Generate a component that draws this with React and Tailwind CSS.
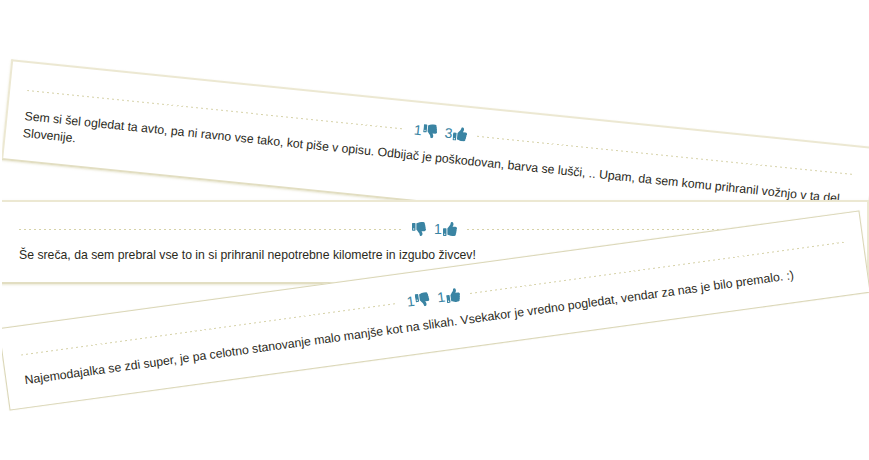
import { FaThumbsUp, FaThumbsDown } from "react-icons/fa";

function Dashes() {
  return <div className="h-px flex-1 bg-[repeating-linear-gradient(90deg,#d6d2a8_0_2px,transparent_2px_5px)]" />;
}

function Votes({ down, up }) {
  return (
    <div className="flex items-center justify-center">
      <Dashes />
      <div className="flex items-center gap-[8px] px-[10px] text-[14px] leading-none text-[#3a84a3]">
        <span className="flex items-center gap-px">
          {down}
          <FaThumbsDown className="text-[14px]" />
        </span>
        <span className="flex items-center gap-px">
          {up}
          <FaThumbsUp className="text-[14px]" />
        </span>
      </div>
      <Dashes />
    </div>
  );
}

function Comment({ down, up, className, children }) {
  return (
    <div className={`w-[869px] bg-white px-[17px] ${className}`}>
      <Votes down={down} up={up} />
      <p className="mt-[11px] text-[12.25px] leading-[17px] text-[#2b2a1c]">{children}</p>
    </div>
  );
}

export default function App() {
  return (
    <div className="h-[460px] w-[869px] overflow-hidden bg-white font-['Liberation_Sans',Arial,sans-serif]">
      {/* the list is clipped 2px in from the left edge */}
      <div className="ml-[2px] h-[460px] w-[867px] overflow-hidden">
        <div className="ml-[-2px] flex flex-col pt-[103px]">
          <Comment
            down="1"
            up="3"
            className="h-[101px] translate-x-[4px] rotate-[5.8deg] border-2 border-[#ece8d2] border-b-[#e2dec2] pt-[20px] shadow-[0_1px_2px_rgba(214,210,170,0.5)]"
          >
            Sem si šel ogledat ta avto, pa ni ravno vse tako, kot piše v opisu. Odbijač je poškodovan, barva se lušči, .. Upam, da sem komu prihranil vožnjo v ta del Slovenije.
          </Comment>
          <Comment
            up="1"
            className="relative mt-[-4px] h-[84px] border-2 border-[#ece8d2] border-b-[#e2dec2] pt-[20px] shadow-[0_1px_2px_rgba(214,210,170,0.5)]"
          >
            Še sreča, da sem prebral vse to in si prihranil nepotrebne kilometre in izgubo živcev!
          </Comment>
          <Comment
            down="1"
            up="1"
            className="relative mt-[-15px] h-[83px] rotate-[-7.8deg] border border-[#dad6b6] pt-[21px] pl-[18px] shadow-[0_0_1px_rgba(214,210,170,0.7)]"
          >
            Najemodajalka se zdi super, je pa celotno stanovanje malo manjše kot na slikah. Vsekakor je vredno pogledat, vendar za nas je bilo premalo. :)
          </Comment>
        </div>
      </div>
    </div>
  );
}
